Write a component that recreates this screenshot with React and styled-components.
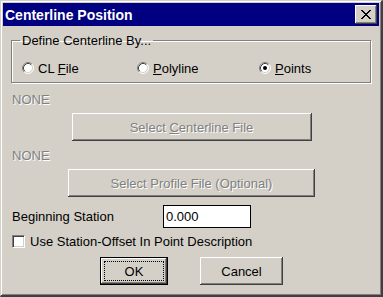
import React from 'react';
import styled, { createGlobalStyle } from 'styled-components';

const FACE = '#d4d0c8';

const Global = createGlobalStyle`
  html, body { margin: 0; padding: 0; background: ${FACE}; }
  body { font-family: "Liberation Sans", Arial, sans-serif; font-size: 13px; }
  #root { width: 383px; height: 297px; }
`;

const Window = styled.div`
  box-sizing: border-box;
  width: 383px;
  height: 297px;
  background: ${FACE};
  border-top: 1px solid ${FACE};
  border-left: 1px solid ${FACE};
  border-right: 2px solid #404040;
  border-bottom: 2px solid #404040;
  box-shadow: inset 1px 1px #fff, inset -1px -1px #808080;
  padding: 2px;
  display: flex;
  flex-direction: column;
  font-family: "Liberation Sans", Arial, sans-serif;
  font-size: 13px;
  color: #000;
`;

const TitleBar = styled.div`
  flex: none;
  height: 23px;
  background: #000080;
  display: flex;
  align-items: center;
  justify-content: space-between;
  padding: 0 2px;
`;

const Title = styled.span`
  color: #fff;
  font-weight: bold;
  font-size: 14px;
  line-height: 16px;
  white-space: nowrap;
`;

const CloseButton = styled.div`
  box-sizing: border-box;
  width: 22px;
  height: 19px;
  background: ${FACE};
  box-shadow: inset -1px -1px #404040, inset 1px 1px #fff, inset -2px -2px #808080, inset 2px 2px ${FACE};
  display: flex;
  align-items: center;
  justify-content: center;
  padding: 0 1px 1px 0;
`;

const Content = styled.div`
  display: flex;
  flex-direction: column;
  padding: 0 7px 0 8px;
`;

const Group = styled.fieldset`
  box-sizing: border-box;
  width: 360px;
  min-width: 0;
  margin: 7px 0 0 0;
  padding: 12px 0 6px 0;
  border: 1px solid #808080;
  box-shadow: inset 1px 1px #fff, 1px 1px #fff;
`;

const Legend = styled.legend`
  margin-left: 8px;
  padding: 0 2px;
  line-height: 15px;
`;

const RadioRow = styled.div`
  display: grid;
  grid-template-columns: 115px 122px auto;
  padding-left: 10px;
  height: 16px;
`;

const RadioItem = styled.label`
  display: flex;
  align-items: center;
  gap: 4px;
  line-height: 15px;
`;

const Muted = styled.div`
  margin: ${p => p.$top}px 0 0 1px;
  line-height: 15px;
  color: #808080;
  text-shadow: 1px 1px #fff;
`;

const PushButton = styled.button`
  box-sizing: border-box;
  width: ${p => p.$w}px;
  height: 28px;
  margin: ${p => p.$top || 0}px 0 0 0;
  align-self: ${p => (p.$center ? 'center' : 'auto')};
  padding: 0;
  border: ${p => (p.$default ? '1px solid #000' : 'none')};
  background: ${FACE};
  font-family: "Liberation Sans", Arial, sans-serif;
  font-size: 13px;
  color: #000;
  display: flex;
  align-items: stretch;
  justify-content: center;
  box-shadow: inset -1px -1px #404040, inset 1px 1px #fff, inset -2px -2px #808080, inset 2px 2px ${FACE};

  &:disabled {
    color: #808080;
    text-shadow: 1px 1px #fff;
  }
`;

const ButtonFace = styled.span`
  flex: 1;
  display: flex;
  align-items: center;
  justify-content: center;
  margin: 3px;
  border: 1px ${p => (p.$focus ? 'dotted #000' : 'solid transparent')};
  line-height: 15px;
  white-space: pre;
`;

const FieldRow = styled.div`
  display: grid;
  grid-template-columns: 151px 88px;
  align-items: center;
  margin: 8px 0 0 1px;
`;

const TextInput = styled.div`
  box-sizing: border-box;
  height: 23px;
  background: #fff;
  border: 1px solid #000;
  padding-left: 2px;
  display: flex;
  align-items: center;
  line-height: 15px;
`;

const CheckRow = styled.label`
  display: flex;
  align-items: center;
  gap: 5px;
  height: 15px;
  margin: 6px 0 0 1px;
  line-height: 15px;
`;

const CheckBox = styled.span`
  box-sizing: border-box;
  width: 13px;
  height: 13px;
  background: #fff;
  border-top: 1px solid #808080;
  border-left: 1px solid #808080;
  border-right: 1px solid #fff;
  border-bottom: 1px solid #fff;
  box-shadow: inset 1px 1px #404040, inset -1px -1px ${FACE};
`;

const ButtonRow = styled.div`
  display: flex;
  justify-content: center;
  gap: 32px;
  margin-top: 8px;
`;

const CloseGlyph = () => {
  const rows = [
    [0, 1, 8, 9],
    [1, 2, 7, 8],
    [2, 3, 6, 7],
    [3, 4, 5, 6],
    [4, 5],
    [3, 4, 5, 6],
    [2, 3, 6, 7],
    [1, 2, 7, 8],
    [0, 1, 8, 9],
  ];
  return (
    <svg width="10" height="9" viewBox="0 0 10 9" shapeRendering="crispEdges">
      {rows.flatMap((cols, y) =>
        cols.map(x => <rect key={`${x}-${y}`} x={x} y={y} width="1" height="1" fill="#000" />)
      )}
    </svg>
  );
};

const Radio = ({ checked }) => (
  <svg width="12" height="12" viewBox="0 0 12 12">
    <circle cx="6" cy="6" r="5" fill="#fff" />
    <path d="M2.11 9.89 A5.5 5.5 0 0 1 9.89 2.11" fill="none" stroke="#808080" strokeWidth="1" />
    <path d="M9.89 2.11 A5.5 5.5 0 0 1 2.11 9.89" fill="none" stroke="#fff" strokeWidth="1" />
    <path d="M2.82 9.18 A4.5 4.5 0 0 1 9.18 2.82" fill="none" stroke="#404040" strokeWidth="1" />
    <path d="M9.18 2.82 A4.5 4.5 0 0 1 2.82 9.18" fill="none" stroke={FACE} strokeWidth="1" />
    {checked && <circle cx="6" cy="6" r="2" fill="#000" />}
  </svg>
);

export default function App() {
  return (
    <>
      <Global />
      <Window>
        <TitleBar>
          <Title>Centerline Position</Title>
          <CloseButton>
            <CloseGlyph />
          </CloseButton>
        </TitleBar>
        <Content>
          <Group>
            <Legend>Define Centerline By...</Legend>
            <RadioRow>
              <RadioItem>
                <Radio />
                <span>CL <u>F</u>ile</span>
              </RadioItem>
              <RadioItem>
                <Radio />
                <span><u>P</u>olyline</span>
              </RadioItem>
              <RadioItem>
                <Radio checked />
                <span><u>P</u>oints</span>
              </RadioItem>
            </RadioRow>
          </Group>
          <Muted $top={9}>NONE</Muted>
          <PushButton disabled $w={240} $top={6} $center>
            <ButtonFace><span>Select <u>C</u>enterline File</span></ButtonFace>
          </PushButton>
          <Muted $top={7}>NONE</Muted>
          <PushButton disabled $w={247} $top={6} $center>
            <ButtonFace><span>Select Profile File (Optional)</span></ButtonFace>
          </PushButton>
          <FieldRow>
            <span>Beginning Station</span>
            <TextInput>0.000</TextInput>
          </FieldRow>
          <CheckRow>
            <CheckBox />
            <span>Use Station-Offset In Point Description</span>
          </CheckRow>
          <ButtonRow>
            <PushButton $w={68} $default>
              <ButtonFace $focus><span>OK</span></ButtonFace>
            </PushButton>
            <PushButton $w={83}>
              <ButtonFace><span>Cancel</span></ButtonFace>
            </PushButton>
          </ButtonRow>
        </Content>
      </Window>
    </>
  );
}
